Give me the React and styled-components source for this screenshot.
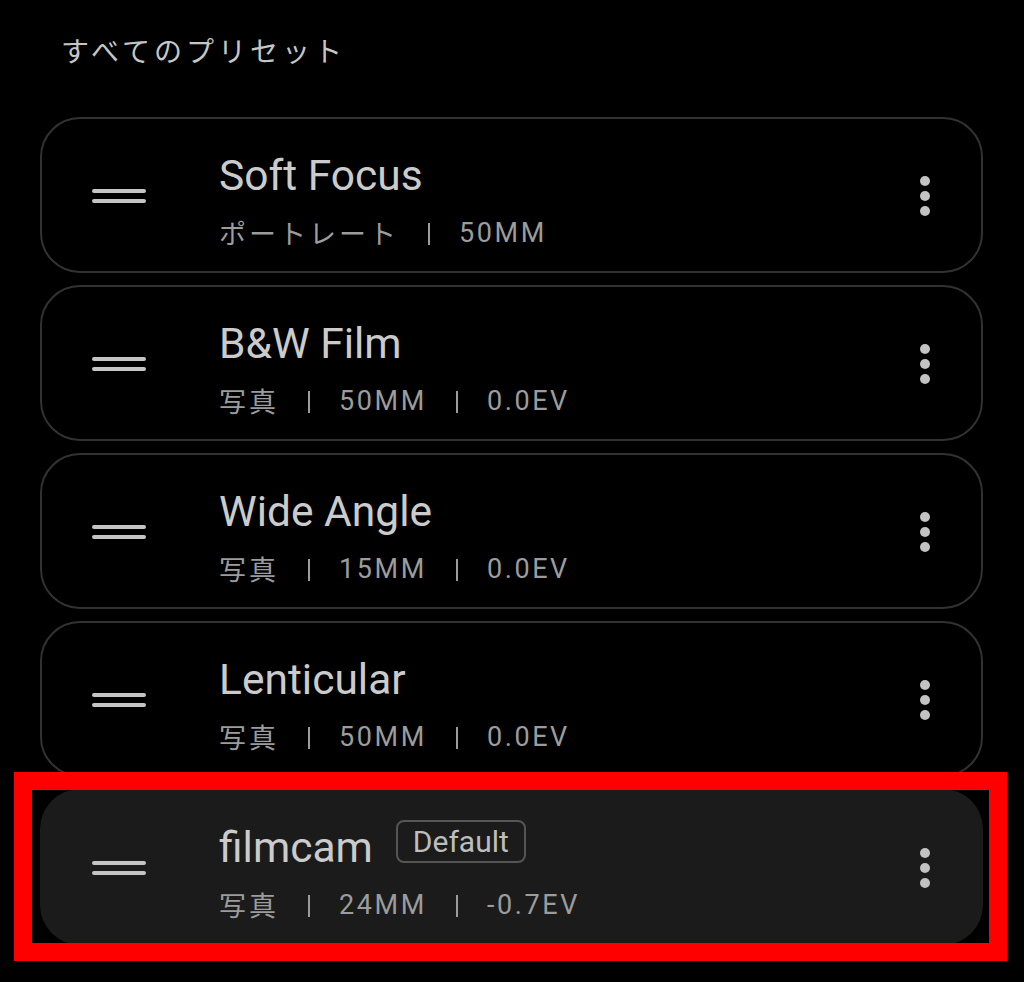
import React from "react";
import styled, { createGlobalStyle } from "styled-components";

const GlobalStyle = createGlobalStyle`
  html, body {
    margin: 0;
    padding: 0;
    background: #000;
  }
  body {
    font-family: Roboto, "Noto Sans CJK JP", sans-serif;
    -webkit-font-smoothing: antialiased;
  }
`;

const Page = styled.div`
  width: 1024px;
  min-height: 982px;
  background: #000;
  box-sizing: border-box;
  padding: 30px 41px 0 40px;
`;

const Heading = styled.h2`
  margin: 0 0 47px 21px;
  font-family: "Noto Sans CJK JP", sans-serif;
  font-weight: 400;
  font-size: 28px;
  line-height: 40px;
  letter-spacing: 4px;
  color: #c6c6c6;
`;

const List = styled.div`
  display: flex;
  flex-direction: column;
  gap: 12px;
`;

const CardWrap = styled.div`
  position: relative;
`;

const Card = styled.div`
  box-sizing: border-box;
  height: 156px;
  border-radius: 40px;
  border: 2px solid ${(p) => (p.$selected ? "transparent" : "#323232")};
  background: ${(p) => (p.$selected ? "#1b1b1b" : "#000")};
  display: flex;
  align-items: center;
  padding: 0 51px 0 50px;
`;

const Handle = styled.div`
  width: 54px;
  display: flex;
  flex-direction: column;
  gap: 6px;
  flex-shrink: 0;
  margin-top: 1px;
`;

const HandleLine = styled.span`
  display: block;
  height: 4px;
  border-radius: 2px;
  background: #c4c4c4;
`;

const Info = styled.div`
  flex: 1;
  align-self: stretch;
  display: flex;
  flex-direction: column;
  padding: 35px 0 0 73px;
`;

const TitleRow = styled.div`
  display: flex;
  align-items: flex-end;
  gap: 23px;
  height: 44px;
`;

const Title = styled.div`
  font-family: Roboto, sans-serif;
  font-size: 42.5px;
  line-height: 44px;
  color: #cbcbcb;
`;

const Badge = styled.span`
  box-sizing: border-box;
  height: 43px;
  padding: 0 15px 0 15px;
  margin-bottom: 7px;
  border: 2px solid #555;
  border-radius: 8px;
  display: flex;
  align-items: center;
  font-family: Roboto, sans-serif;
  font-size: 30px;
  color: #bdbdbd;
`;

const Meta = styled.div`
  display: flex;
  align-items: center;
  gap: 29px;
  margin-top: 18px;
  height: 34px;
  color: #9c9c9c;
`;

const MetaItem = styled.span`
  font-family: ${(p) =>
    p.$cjk ? '"Noto Sans CJK JP", sans-serif' : "Roboto, sans-serif"};
  font-size: 27px;
  letter-spacing: ${(p) => (p.$cjk ? "3px" : "2.6px")};
  line-height: 34px;
`;

const Divider = styled.span`
  display: block;
  width: 2px;
  height: 22px;
  background: #9c9c9c;
  margin-top: 2px;
`;

const Kebab = styled.div`
  display: flex;
  flex-direction: column;
  gap: 5px;
  margin-top: 2px;
`;

const Dot = styled.span`
  display: block;
  width: 10px;
  height: 10px;
  border-radius: 50%;
  background: #c2c2c2;
`;

const Highlight = styled.div`
  position: absolute;
  left: -26px;
  top: -17px;
  width: 993px;
  height: 189px;
  box-sizing: border-box;
  border: 18px solid #ff0000;
  pointer-events: none;
`;

const presets = [
  { name: "Soft Focus", meta: ["ポートレート", "50MM"] },
  { name: "B&W Film", meta: ["写真", "50MM", "0.0EV"] },
  { name: "Wide Angle", meta: ["写真", "15MM", "0.0EV"] },
  { name: "Lenticular", meta: ["写真", "50MM", "0.0EV"] },
  { name: "filmcam", meta: ["写真", "24MM", "-0.7EV"], isDefault: true, selected: true },
];

const isCjk = (s) => /[\u3000-\u9fff]/.test(s);

export default function App() {
  return (
    <>
      <GlobalStyle />
      <Page>
        <Heading>すべてのプリセット</Heading>
        <List>
          {presets.map((p) => (
            <CardWrap key={p.name}>
              <Card $selected={p.selected}>
                <Handle>
                  <HandleLine />
                  <HandleLine />
                </Handle>
                <Info>
                  <TitleRow>
                    <Title>{p.name}</Title>
                    {p.isDefault && <Badge>Default</Badge>}
                  </TitleRow>
                  <Meta>
                    {p.meta.map((m, i) => (
                      <React.Fragment key={i}>
                        {i > 0 && <Divider />}
                        <MetaItem $cjk={isCjk(m)}>{m}</MetaItem>
                      </React.Fragment>
                    ))}
                  </Meta>
                </Info>
                <Kebab>
                  <Dot />
                  <Dot />
                  <Dot />
                </Kebab>
              </Card>
              {p.selected && <Highlight />}
            </CardWrap>
          ))}
        </List>
      </Page>
    </>
  );
}
